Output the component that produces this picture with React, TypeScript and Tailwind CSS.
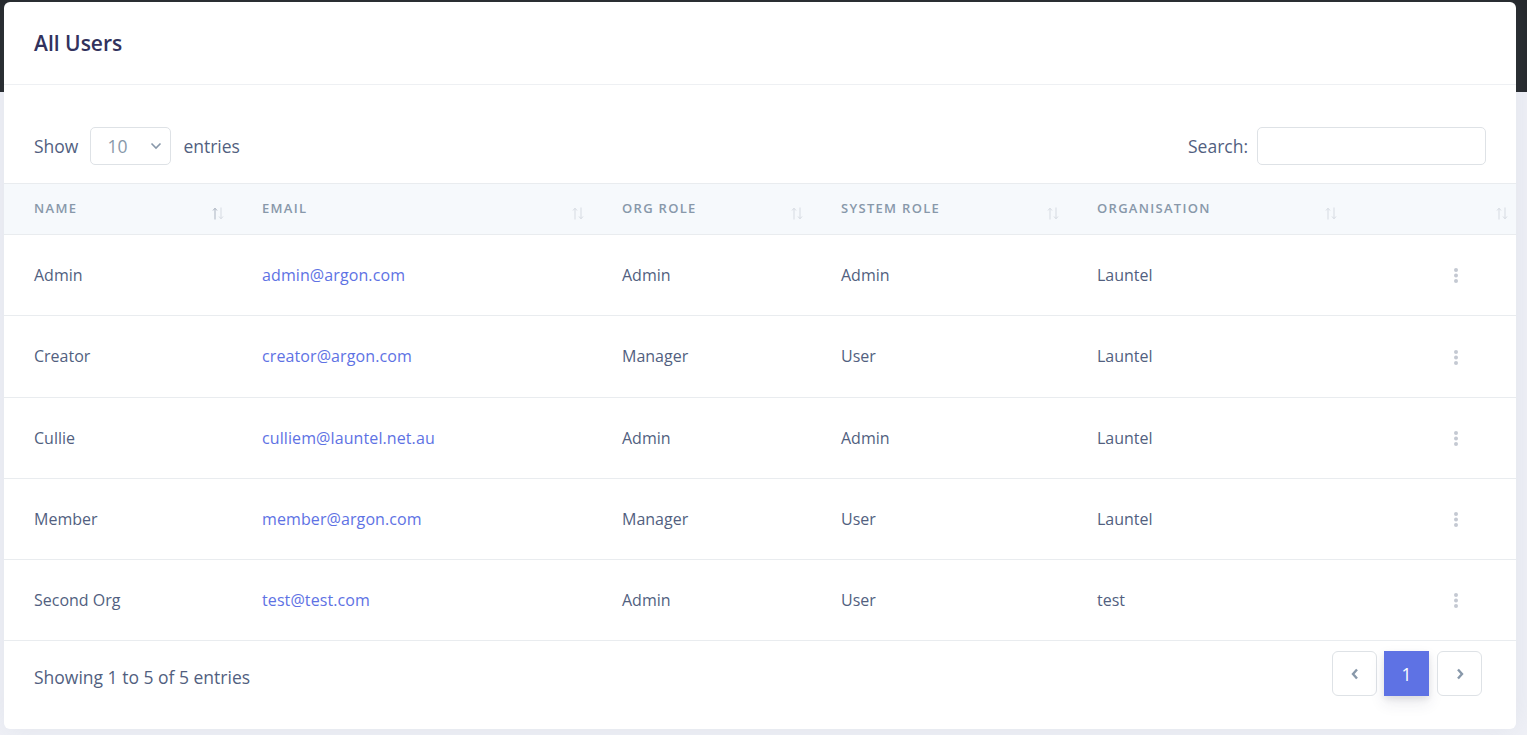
import React from 'react';

type User = { name: string; email: string; orgRole: string; systemRole: string; org: string };

const users: User[] = [
  { name: 'Admin', email: 'admin@argon.com', orgRole: 'Admin', systemRole: 'Admin', org: 'Launtel' },
  { name: 'Creator', email: 'creator@argon.com', orgRole: 'Manager', systemRole: 'User', org: 'Launtel' },
  { name: 'Cullie', email: 'culliem@launtel.net.au', orgRole: 'Admin', systemRole: 'Admin', org: 'Launtel' },
  { name: 'Member', email: 'member@argon.com', orgRole: 'Manager', systemRole: 'User', org: 'Launtel' },
  { name: 'Second Org', email: 'test@test.com', orgRole: 'Admin', systemRole: 'User', org: 'test' },
];

const columns = [
  { label: 'Name', width: 228, active: true },
  { label: 'Email', width: 360 },
  { label: 'Org Role', width: 219 },
  { label: 'System Role', width: 256 },
  { label: 'Organisation', width: 278 },
  { label: '', width: 171 },
];

const SortArrows = ({ active }: { active?: boolean }) => (
  <svg width="12" height="13" viewBox="0 0 12 13" className="mt-[8px] shrink-0">
    <g stroke={active ? '#aab3c0' : '#d6dbe2'} strokeWidth="1" fill="none">
      <path d="M3 12.5V1.5" />
      <path d="M1 3.5L3 1.2L5 3.5" />
    </g>
    <g stroke="#d6dbe2" strokeWidth="1" fill="none">
      <path d="M9 0.5V11.5" />
      <path d="M7 9.5L9 11.8L11 9.5" />
    </g>
  </svg>
);

const Dots = () => (
  <svg width="4" height="15" viewBox="0 0 4 15" className="inline-block align-middle">
    <circle cx="2" cy="2" r="2" fill="#c4c9d2" />
    <circle cx="2" cy="7.5" r="2" fill="#c4c9d2" />
    <circle cx="2" cy="13" r="2" fill="#c4c9d2" />
  </svg>
);

export default function App() {
  return (
    <div className="min-h-[735px] bg-[#f0f1f7] font-['Open_Sans',sans-serif] text-[#525f7f]">
      <div className="h-[92px] bg-[#24272b]" />
      <div className="-mt-[90px] ml-[4px] w-[1512px] rounded-[6px] bg-white shadow-[0_0_32px_0_rgba(136,152,170,0.15)]">
        {/* card header */}
        <div className="border-b border-[#eef0f3] px-[30px] pt-[25px] pb-[24px]">
          <h3 className="text-[21px] leading-[33px] font-semibold text-[#32325d]">All Users</h3>
        </div>

        {/* length + search */}
        <div className="flex items-center justify-between pt-[42px] pb-[18px] pl-[30px] pr-[30px] text-[17.5px]">
          <div className="flex items-center gap-[12px]">
            <span>Show</span>
            <div className="flex h-[38px] w-[81px] items-center justify-between rounded-[5px] border border-[#dee2e6] pl-[16px] pr-[8px] text-[#8898aa]">
              <span>10</span>
              <svg width="12" height="8" viewBox="0 0 12 8">
                <path d="M1.5 1.5L6 6L10.5 1.5" stroke="#8898aa" strokeWidth="1.6" fill="none" />
              </svg>
            </div>
            <span>entries</span>
          </div>
          <div className="flex items-center gap-[9px]">
            <span>Search:</span>
            <input className="h-[38px] w-[229px] rounded-[5px] border border-[#dee2e6] px-3 outline-none" />
          </div>
        </div>

        {/* table */}
        <table className="w-full table-fixed border-collapse">
          <colgroup>
            {columns.map((c, i) => (
              <col key={i} style={{ width: c.width }} />
            ))}
          </colgroup>
          <thead>
            <tr className="h-[51px] border-y border-[#e9ecef] bg-[#f6f9fc]">
              {columns.map((c, i) => (
                <th key={i} className="pl-[30px] pr-[8px] text-left align-middle">
                  <div className="flex items-start justify-between">
                    <span className="text-[13px] font-semibold uppercase tracking-[1.3px] text-[#8898aa]">{c.label}</span>
                    <SortArrows active={c.active} />
                  </div>
                </th>
              ))}
            </tr>
          </thead>
          <tbody className="text-[16px]">
            {users.map((u) => (
              <tr key={u.email} className="h-[81.25px] border-b border-[#e9ecef]">
                <td className="pl-[30px]">{u.name}</td>
                <td className="pl-[30px] tracking-[0.1px] text-[#5e72e4]">{u.email}</td>
                <td className="pl-[30px]">{u.orgRole}</td>
                <td className="pl-[30px]">{u.systemRole}</td>
                <td className="pl-[30px]">{u.org}</td>
                <td className="pr-[58px] pb-[2px] text-right">
                  <Dots />
                </td>
              </tr>
            ))}
          </tbody>
        </table>

        {/* footer */}
        <div className="flex h-[88px] items-start justify-between pl-[30px] pr-[34px]">
          <div className="pt-[23px] text-[17.5px] leading-[26px]">Showing 1 to 5 of 5 entries</div>
          <div className="flex items-center gap-[7px] pt-[10px]">
            <button className="flex h-[45px] w-[45px] items-center justify-center rounded-[6px] border border-[#dee2e6] bg-white">
              <svg width="8" height="12" viewBox="0 0 8 12">
                <path d="M6 1.5L2 6L6 10.5" stroke="#8898aa" strokeWidth="2.4" fill="none" />
              </svg>
            </button>
            <button className="flex h-[45px] w-[45px] items-center justify-center bg-[#5e72e4] text-[17.5px] text-white shadow-[0_7px_14px_rgba(50,50,93,0.1),0_3px_6px_rgba(0,0,0,0.08)]">
              1
            </button>
            <button className="ml-[1px] flex h-[45px] w-[45px] items-center justify-center rounded-[6px] border border-[#dee2e6] bg-white">
              <svg width="8" height="12" viewBox="0 0 8 12">
                <path d="M2 1.5L6 6L2 10.5" stroke="#8898aa" strokeWidth="2.4" fill="none" />
              </svg>
            </button>
          </div>
        </div>
      </div>
    </div>
  );
}
